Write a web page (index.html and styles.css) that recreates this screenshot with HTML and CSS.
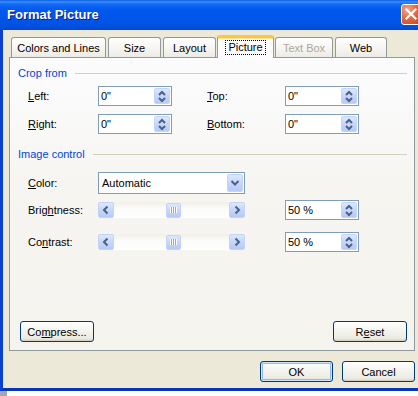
FILE: index.html
```html
<!DOCTYPE html>
<html lang="en">
<head>
  <meta charset="UTF-8">
  <title>Format Picture</title>
  <link rel="stylesheet" href="styles.css">
</head>
<body>
  <div class="window">
    <div class="titlebar">
      <span class="title">Format Picture</span>
      <span class="close">
        <svg width="19" height="19" viewBox="0 0 19 19"><path d="M4.5 4.5 L13.5 13.5 M13.5 4.5 L4.5 13.5" stroke="#fff" stroke-width="2.2" stroke-linecap="square"/></svg>
      </span>
    </div>

    <div class="client">
      <div class="tabs">
        <div class="tab tab-wide">Colors and Lines</div>
        <div class="tab">Size</div>
        <div class="tab">Layout</div>
        <div class="tab active"><span class="focus">Picture</span></div>
        <div class="tab disabled">Text Box</div>
        <div class="tab tab-narrow">Web</div>
      </div>

      <div class="panel">
        <div class="group-title"><span>Crop from</span></div>
        <div class="row">
          <label class="label"><u>L</u>eft:</label>
          <div class="spin"><span>0"</span><span class="spin-btn"><svg width="16" height="16" viewBox="0 0 16 16"><polyline points="5,7 8,4 11,7" /><polyline points="5,10 8,13 11,10" /></svg></span></div>
          <label class="label label-far"><u>T</u>op:</label>
          <div class="spin"><span>0"</span><span class="spin-btn"><svg width="16" height="16" viewBox="0 0 16 16"><polyline points="5,7 8,4 11,7" /><polyline points="5,10 8,13 11,10" /></svg></span></div>
        </div>
        <div class="row row-second">
          <label class="label"><u>R</u>ight:</label>
          <div class="spin"><span>0"</span><span class="spin-btn"><svg width="16" height="16" viewBox="0 0 16 16"><polyline points="5,7 8,4 11,7" /><polyline points="5,10 8,13 11,10" /></svg></span></div>
          <label class="label label-far"><u>B</u>ottom:</label>
          <div class="spin"><span>0"</span><span class="spin-btn"><svg width="16" height="16" viewBox="0 0 16 16"><polyline points="5,7 8,4 11,7" /><polyline points="5,10 8,13 11,10" /></svg></span></div>
        </div>

        <div class="group-title group-second"><span>Image control</span></div>
        <div class="row row-color">
          <label class="label"><u>C</u>olor:</label>
          <div class="combo"><span>Automatic</span><span class="combo-btn"><svg width="16" height="18" viewBox="0 0 16 18"><polyline points="4.5,7 8,10.5 11.5,7" /></svg></span></div>
        </div>
        <div class="row row-bright">
          <label class="label">Brig<u>h</u>tness:</label>
          <div class="slider">
            <span class="slider-btn"><svg width="16" height="16" viewBox="0 0 16 16"><polyline points="9.5,4.5 6,8 9.5,11.5" /></svg></span>
            <span class="track"><span class="thumb"></span></span>
            <span class="slider-btn"><svg width="16" height="16" viewBox="0 0 16 16"><polyline points="6.5,4.5 10,8 6.5,11.5" /></svg></span>
          </div>
          <div class="spin spin-far"><span>50 %</span><span class="spin-btn"><svg width="16" height="16" viewBox="0 0 16 16"><polyline points="5,7 8,4 11,7" /><polyline points="5,10 8,13 11,10" /></svg></span></div>
        </div>
        <div class="row row-contrast">
          <label class="label">Co<u>n</u>trast:</label>
          <div class="slider">
            <span class="slider-btn"><svg width="16" height="16" viewBox="0 0 16 16"><polyline points="9.5,4.5 6,8 9.5,11.5" /></svg></span>
            <span class="track"><span class="thumb"></span></span>
            <span class="slider-btn"><svg width="16" height="16" viewBox="0 0 16 16"><polyline points="6.5,4.5 10,8 6.5,11.5" /></svg></span>
          </div>
          <div class="spin spin-far"><span>50 %</span><span class="spin-btn"><svg width="16" height="16" viewBox="0 0 16 16"><polyline points="5,7 8,4 11,7" /><polyline points="5,10 8,13 11,10" /></svg></span></div>
        </div>

        <div class="panel-buttons">
          <button class="btn">Co<u>m</u>press...</button>
          <button class="btn">R<u>e</u>set</button>
        </div>
      </div>

      <div class="dialog-buttons">
        <button class="btn btn-dialog btn-default">OK</button>
        <button class="btn btn-dialog">Cancel</button>
      </div>
    </div>
  </div>
  <div class="desk-corner"></div>
</body>
</html>
```

FILE: styles.css
```css
* {
  margin: 0;
  padding: 0;
  box-sizing: border-box;
}

html,
body {
  background-color: #fff;
  overflow: hidden;
}

body {
  width: 418px;
  height: 396px;
  font-family: 'Liberation Sans', Tahoma, sans-serif;
  font-size: 11px;
  color: #000;
}

u {
  text-decoration: underline;
  text-underline-offset: 1px;
}

/* window frame */
.window {
  width: 426px;
}

.titlebar {
  height: 30px;
  display: flex;
  align-items: center;
  justify-content: space-between;
  padding: 0 4px 1px 7px;
  background: linear-gradient(to bottom, #0b5ee0 0%, #3b8dfb 6%, #1269f5 14%, #0058ee 35%, #0055e8 70%, #0050dc 90%, #0a46c8 100%);
}

.title {
  color: #fff;
  font-weight: bold;
  font-size: 13px;
  text-shadow: 1px 1px #0a1a8a;
}

.close {
  width: 21px;
  height: 21px;
  display: flex;
  align-items: center;
  justify-content: center;
  border: 1px solid #fff;
  border-radius: 3px;
  background: radial-gradient(circle at 30% 25%, #f4a58a 0%, #e26a45 45%, #c9421f 100%);
}

.client {
  height: 361px;
  background-color: #ece9d8;
  border: 3px solid #0841d4;
  border-top: none;
  border-bottom-color: #0535b8;
  padding: 5px 8px 0 6px;
}

/* tabs */
.tabs {
  display: flex;
  align-items: flex-end;
  height: 22px;
  padding-left: 2px;
  gap: 2px;
}

.tab {
  width: 53px;
  height: 20px;
  flex-shrink: 0;
  display: flex;
  align-items: center;
  justify-content: center;
  white-space: nowrap;
  border: 1px solid #919b9c;
  border-bottom: none;
  border-radius: 3px 3px 0 0;
  background: linear-gradient(to bottom, #fefefe 0%, #f7f6f2 50%, #ecebe5 100%);
}

.tab-wide {
  width: 95px;
}

.tab-narrow {
  width: 52px;
}

.tab.active {
  position: relative;
  z-index: 1;
  width: 57px;
  height: 23px;
  margin: 0 -1px -1px -1px;
  padding-bottom: 2px;
  border-top: 3px solid #ffc83c;
  box-shadow: inset 0 1px 0 #ffe39c;
  background: #fcfcfe;
}

.tab.disabled {
  width: 58px;
  color: #aca899;
}

.focus {
  border: 1px dotted #000;
  padding: 0 2px;
  line-height: 13px;
}

/* tab panel */
.panel {
  height: 294px;
  display: flex;
  flex-direction: column;
  padding: 8px 7px 8px 8px;
  border: 1px solid #919b9c;
  background: linear-gradient(to bottom, #fcfcfe 0%, #f6f5f1 45%, #f4f3ee 100%);
}

.group-title {
  height: 14px;
  display: flex;
  align-items: center;
  gap: 8px;
  color: #0046d5;
}

.group-title::after {
  content: "";
  flex: 1;
  height: 1px;
  background-color: #d0d0bf;
}

.group-second {
  margin-top: 13px;
}

.row {
  height: 20px;
  display: flex;
  align-items: center;
  padding-left: 10px;
  margin-top: 6px;
}

.row-second {
  margin-top: 8px;
}

.row-color {
  height: 22px;
  margin-top: 11px;
}

.row-bright {
  margin-top: 6px;
}

.row-contrast {
  margin-top: 12px;
}

.label {
  width: 70px;
  flex-shrink: 0;
}

.label-far {
  width: 78px;
  margin-left: 35px;
}

/* spin boxes */
.spin {
  width: 74px;
  height: 20px;
  display: flex;
  align-items: center;
  padding-left: 2px;
  border: 1px solid #7f9db9;
  background-color: #fff;
}

.spin-far {
  margin-left: 40px;
}

.spin-btn,
.combo-btn,
.slider-btn {
  flex-shrink: 0;
  display: flex;
  border: 1px solid #c3d4fb;
  border-radius: 2px;
  background: linear-gradient(to bottom, #dde8fe 0%, #c6d6fb 50%, #b6caf4 100%);
}

.spin-btn {
  width: 16px;
  height: 16px;
  margin-left: auto;
  margin-right: 1px;
}

.spin-btn svg,
.combo-btn svg,
.slider-btn svg {
  margin: -1px;
  fill: none;
  stroke: #4d6185;
  stroke-width: 2;
}

/* combo */
.combo {
  width: 147px;
  height: 22px;
  display: flex;
  align-items: center;
  padding-left: 3px;
  border: 1px solid #7f9db9;
  background-color: #fff;
}

.combo-btn {
  width: 16px;
  height: 18px;
  margin-left: auto;
  margin-right: 1px;
}

/* sliders */
.slider {
  width: 147px;
  height: 16px;
  display: flex;
  background: linear-gradient(to bottom, #f1efe8 0%, #fbfbf9 40%, #fefefe 100%);
}

.slider-btn {
  width: 16px;
  height: 16px;
}

.track {
  flex: 1;
  display: flex;
  align-items: center;
  justify-content: center;
  padding-left: 3px;
}

.thumb {
  width: 15px;
  height: 15px;
  display: flex;
  align-items: center;
  justify-content: center;
  border: 1px solid #c3d4fb;
  border-radius: 2px;
  background: linear-gradient(to bottom, #dde8fe 0%, #c6d6fb 50%, #b6caf4 100%);
}

.thumb::after {
  content: "";
  width: 7px;
  height: 6px;
  background: repeating-linear-gradient(to right, #fff 0 1px, #8ea8e0 1px 2px);
}

/* buttons */
.panel-buttons {
  margin-top: auto;
  display: flex;
  justify-content: space-between;
  padding-left: 2px;
}

.btn {
  width: 74px;
  height: 21px;
  font-family: inherit;
  font-size: 11px;
  color: #000;
  border: 1px solid #003c74;
  border-radius: 3px;
  background: linear-gradient(to bottom, #ffffff 0%, #f5f5f1 40%, #ecebe4 85%, #d9d4c6 100%);
  box-shadow: inset 0 -1px 0 #d6d0c5;
}

.dialog-buttons {
  margin-top: 10px;
  display: flex;
  justify-content: flex-end;
  gap: 9px;
}

.btn-dialog {
  width: 73px;
}

.btn-default {
  box-shadow: inset 0 0 0 1px #cee7ff, inset 0 0 0 2px #98b8ea;
}

.desk-corner {
  width: 7px;
  height: 5px;
  background-color: #a4a6b6;
}
```
